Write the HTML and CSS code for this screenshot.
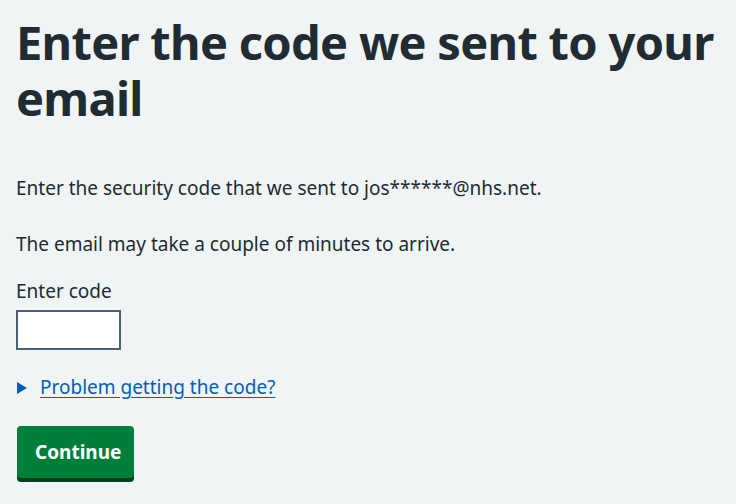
FILE: index.html
```html
<!DOCTYPE html>
<html lang="en">
<head>
<meta charset="utf-8">
<title>Enter the code we sent to your email</title>
<link rel="stylesheet" href="styles.css">
</head>
<body>
<main class="page">
  <h1 class="title">Enter the code we sent to your email</h1>
  <p class="body-text first">Enter the security code that we sent to jos******@nhs.net.</p>
  <p class="body-text second">The email may take a couple of minutes to arrive.</p>
  <div class="form-group">
    <label class="label" for="code">Enter code</label>
    <input class="input" id="code" type="text">
  </div>
  <details class="details">
    <summary class="summary"><span class="arrow"></span><span class="summary-text">Problem getting the code?</span></summary>
  </details>
  <div class="button-wrap">
    <button class="button" type="submit">Continue</button>
  </div>
</main>
</body>
</html>
```
FILE: styles.css
```css
html, body {
  margin: 0;
  padding: 0;
  background: #f0f4f5;
}
body {
  font-family: "Noto Sans", "Open Sans", sans-serif;
  color: #212b32;
}
.page {
  padding: 14px 16px 0 16px;
  display: flex;
  flex-direction: column;
  align-items: flex-start;
}
.title {
  font-size: 47px;
  line-height: 56px;
  font-weight: 700;
  letter-spacing: -0.7px;
  margin: 0 0 48px 0;
}
.body-text {
  font-size: 19px;
  line-height: 28px;
  margin: 0;
}
.first { margin-bottom: 28px; }
.second { margin-bottom: 19px; }
.form-group {
  display: flex;
  flex-direction: column;
  align-items: flex-start;
}
.label {
  font-size: 19px;
  line-height: 28px;
  margin-bottom: 5px;
}
.input {
  box-sizing: border-box;
  width: 105px;
  height: 40px;
  border: 2px solid #4c6272;
  background: #fff;
  border-radius: 0;
  margin: 0;
  padding: 4px;
  font: inherit;
  font-size: 19px;
}
.details {
  margin-top: 23px;
  margin-bottom: 25px;
}
.summary {
  list-style: none;
  display: flex;
  align-items: center;
  gap: 13px;
  font-size: 19px;
  line-height: 28px;
  cursor: pointer;
  padding-left: 1px;
}
.summary::-webkit-details-marker { display: none; }
.arrow {
  width: 0;
  height: 0;
  border-style: solid;
  border-width: 6px 0 6px 10px;
  border-color: transparent transparent transparent #005eb8;
  margin-top: 2px;
}
.summary-text {
  color: #005eb8;
  text-decoration: underline;
  text-underline-offset: 3px;
}
.button-wrap {
  padding-bottom: 4px;
  margin-left: 1px;
}
.button {
  display: block;
  box-sizing: border-box;
  font-family: inherit;
  font-size: 19px;
  font-weight: 700;
  line-height: 24px;
  color: #fff;
  background: #007f3b;
  border: 2px solid #007f3b;
  border-radius: 4px;
  box-shadow: 0 4px 0 #00401e;
  padding: 12px 16px;
  height: 52px;
  width: 117px;
  margin: 0;
  cursor: pointer;
}
```
